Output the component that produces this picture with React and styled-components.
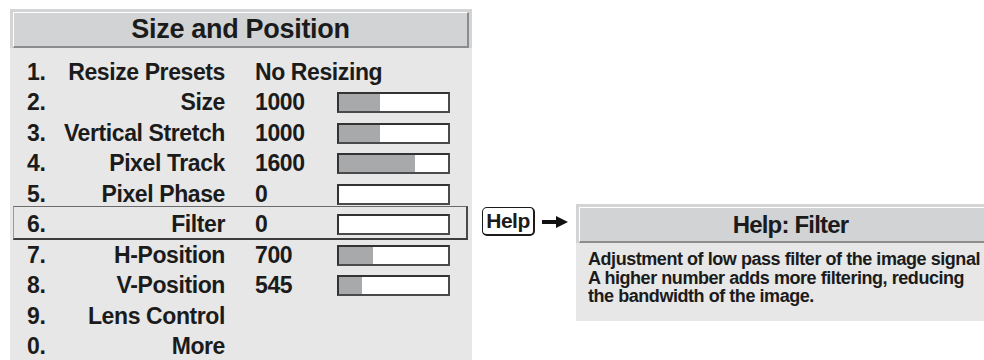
import React from 'react';
import styled, { createGlobalStyle } from 'styled-components';

const rows = [
  { num: '1.', label: 'Resize Presets', value: 'No Resizing' },
  { num: '2.', label: 'Size', value: '1000', level: 38 },
  { num: '3.', label: 'Vertical Stretch', value: '1000', level: 38 },
  { num: '4.', label: 'Pixel Track', value: '1600', level: 70 },
  { num: '5.', label: 'Pixel Phase', value: '0', level: 0 },
  { num: '6.', label: 'Filter', value: '0', level: 0, active: true },
  { num: '7.', label: 'H-Position', value: '700', level: 31 },
  { num: '8.', label: 'V-Position', value: '545', level: 21 },
  { num: '9.', label: 'Lens Control' },
  { num: '0.', label: 'More' },
];

export default function App() {
  return (
    <>
      <GlobalStyle />
      <Page>
        <MenuPanel>
          <HeaderFrame>
            <HeaderBar $size={27} $spacing={-0.3}>Size and Position</HeaderBar>
          </HeaderFrame>
          <MenuBody>
            {rows.map((row) => (
              <Row key={row.num} $active={row.active}>
                <Num>{row.num}</Num>
                <Label>{row.label}</Label>
                {row.value !== undefined && <Value>{row.value}</Value>}
                {row.level !== undefined && (
                  <Bar>
                    <Fill style={{ width: `${row.level}%` }} />
                  </Bar>
                )}
              </Row>
            ))}
          </MenuBody>
        </MenuPanel>

        <HelpSide>
          <HelpKey>Help</HelpKey>
          <Arrow width="26" height="12" viewBox="0 0 26 12">
            <rect x="0" y="4" width="15" height="4" fill="#111" />
            <polygon points="14,0 26,6 14,12" fill="#111" />
          </Arrow>
          <HelpPanel>
            <HeaderFrame>
              <HeaderBar $size={24} $spacing={-0.8}>Help: Filter</HeaderBar>
            </HeaderFrame>
            <HelpBody>
              <Line>Adjustment of low pass filter of the image signal</Line>
              <Line>A higher number adds more filtering, reducing</Line>
              <Line>the bandwidth of the image.</Line>
            </HelpBody>
          </HelpPanel>
        </HelpSide>
      </Page>
    </>
  );
}

const GlobalStyle = createGlobalStyle`
  html, body {
    margin: 0;
    padding: 0;
    background: #ffffff;
  }
  body {
    font-family: 'Liberation Sans', Arial, sans-serif;
    color: #1b1b1b;
    overflow: hidden;
  }
`;

const Page = styled.div`
  width: 984px;
  height: 360px;
  display: flex;
  align-items: flex-start;
  overflow: hidden;
`;

const MenuPanel = styled.div`
  margin: 9px 0 0 10px;
  width: 462px;
  height: 351px;
  background: #e6e7e6;
  flex-shrink: 0;
`;

const HeaderFrame = styled.div`
  background: #d3d4d5;
  padding: 3px 3px 0 3px;
`;

const HeaderBar = styled.div`
  height: 36px;
  box-sizing: border-box;
  background: #d2d3d4;
  border-top: 1px solid #ffffff;
  border-left: 1px solid #ffffff;
  border-right: 2px solid #8b8c8d;
  border-bottom: 2px solid #8b8c8d;
  display: flex;
  align-items: center;
  justify-content: center;
  font-weight: bold;
  font-size: ${({ $size }) => $size}px;
  letter-spacing: ${({ $spacing }) => $spacing}px;
  white-space: nowrap;
`;

const MenuBody = styled.div`
  padding-top: 9px;
`;

const Row = styled.div`
  position: relative;
  height: 30.5px;
  display: flex;
  align-items: center;
  padding-left: 17px;
  font-weight: bold;
  font-size: 23px;
  letter-spacing: -0.4px;
  white-space: nowrap;

  ${({ $active }) =>
    $active &&
    `
    &::before {
      content: '';
      position: absolute;
      left: 3px;
      right: 4px;
      top: -4px;
      bottom: 0;
      border-top: 1px solid #6a6a6a;
      border-left: 1px solid #9a9a9a;
      border-right: 2px solid #4a4a4a;
      border-bottom: 2px solid #3c3c3c;
      pointer-events: none;
    }
  `}
`;

const Num = styled.span`
  width: 30px;
`;

const Label = styled.span`
  width: 168px;
  text-align: right;
`;

const Value = styled.span`
  margin-left: 30px;
  width: 82px;
`;

const Bar = styled.div`
  width: 113px;
  height: 21px;
  box-sizing: border-box;
  background: #ffffff;
  border: 2px solid #333333;
  border-right-color: #4a4a4a;
  border-bottom-color: #4a4a4a;
  display: flex;
`;

const Fill = styled.div`
  height: 100%;
  background: #a8a9ab;
`;

const HelpSide = styled.div`
  margin: 204px 0 0 10px;
  display: flex;
  align-items: flex-start;
  flex-shrink: 0;
`;

const HelpKey = styled.div`
  margin-top: 3px;
  width: 53px;
  height: 29px;
  box-sizing: border-box;
  border: 1.5px solid #1b1b1b;
  border-right-width: 2.5px;
  border-bottom-width: 2.5px;
  border-radius: 5px;
  display: flex;
  align-items: center;
  justify-content: center;
  font-weight: bold;
  font-size: 21px;
  letter-spacing: -0.5px;
  background: #ffffff;
`;

const Arrow = styled.svg`
  margin: 12px 0 0 7px;
  flex-shrink: 0;
`;

const HelpPanel = styled.div`
  margin-left: 8px;
  width: 430px;
  height: 117px;
  background: #e6e7e6;
  flex-shrink: 0;
`;

const HelpBody = styled.div`
  padding: 7px 0 0 12px;
  font-weight: bold;
  font-size: 18px;
  letter-spacing: -0.45px;
  line-height: 18.5px;
`;

const Line = styled.div`
  white-space: nowrap;
`;
